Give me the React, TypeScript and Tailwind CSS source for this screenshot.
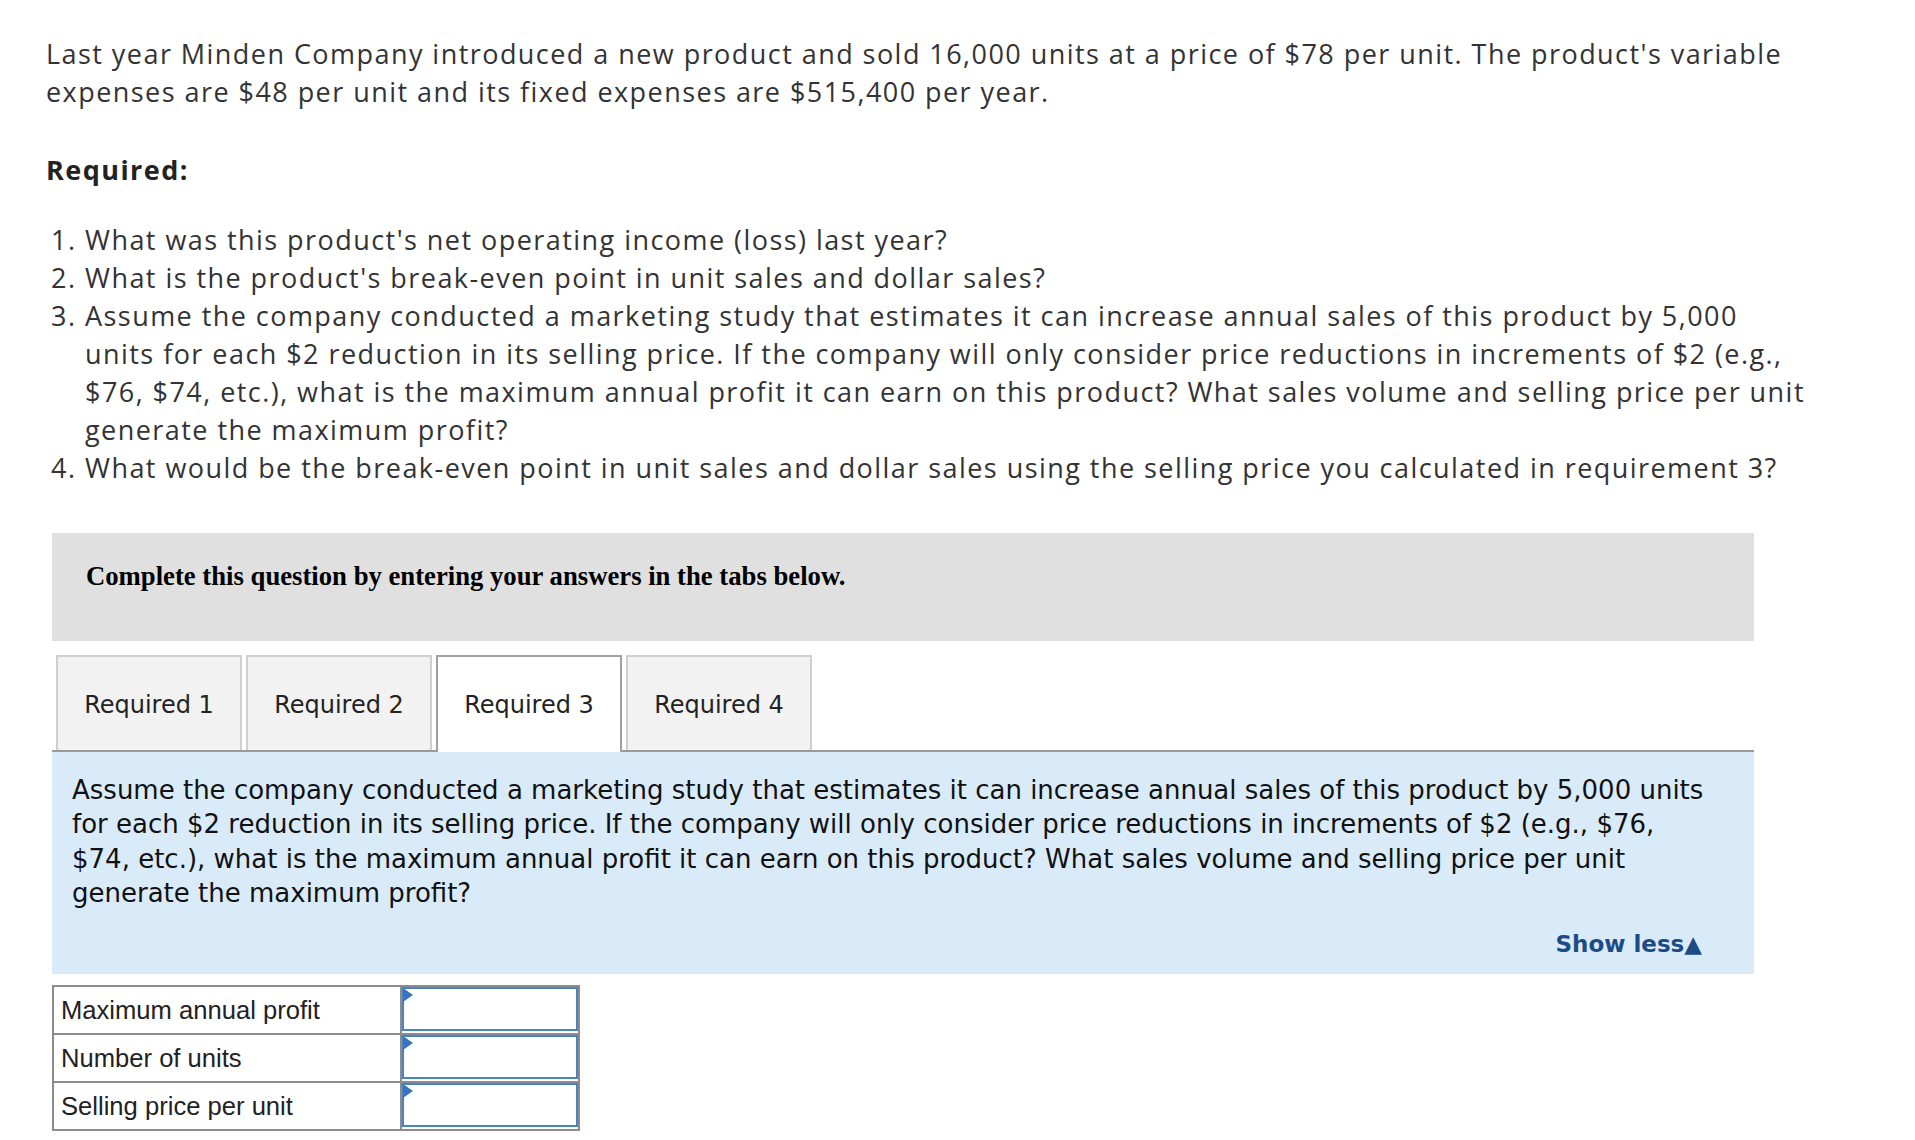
const TABS = ['Required 1', 'Required 2', 'Required 3', 'Required 4']

const ROWS = ['Maximum annual profit', 'Number of units', 'Selling price per unit']

function Requirement({ n, children }: { n: number; children: React.ReactNode }) {
  return (
    <li className="flex">
      <span className="w-[39px] shrink-0 pl-[5px]">{n}.</span>
      <span>{children}</span>
    </li>
  )
}

function AnswerCell() {
  return (
    <td className="border-2 border-[#8c8c8c] p-0 w-[178px] h-[48px] align-top">
      <div className="relative h-[44px] border-2 border-[#4a82c6] bg-white">
        <svg className="absolute left-[-1px] top-[-1px]" width="10" height="14" viewBox="0 0 10 14">
          <path d="M0 0 L10 7 L0 14 Z" fill="#3a74c0" />
        </svg>
      </div>
    </td>
  )
}

export default function App() {
  return (
    <div className="min-h-screen bg-white">
      <div className="pl-[46px] pt-[35px] text-[#333] font-['Open_Sans',sans-serif] text-[27px] tracking-[1.45px] leading-[38px]">
        <p className="whitespace-nowrap">
          Last year Minden Company introduced a new product and sold 16,000 units at a price of $78 per unit. The product's variable
          <br />
          expenses are $48 per unit and its fixed expenses are $515,400 per year.
        </p>

        <p className="mt-[40px] font-bold text-[#222]">Required:</p>

        <ol className="mt-[32px] whitespace-nowrap">
          <Requirement n={1}>What was this product's net operating income (loss) last year?</Requirement>
          <Requirement n={2}>What is the product's break-even point in unit sales and dollar sales?</Requirement>
          <Requirement n={3}>
            Assume the company conducted a marketing study that estimates it can increase annual sales of this product by 5,000
            <br />
            units for each $2 reduction in its selling price. If the company will only consider price reductions in increments of $2 (e.g.,
            <br />
            $76, $74, etc.), what is the maximum annual profit it can earn on this product? What sales volume and selling price per unit
            <br />
            generate the maximum profit?
          </Requirement>
          <Requirement n={4}>
            What would be the break-even point in unit sales and dollar sales using the selling price you calculated in requirement 3?
          </Requirement>
        </ol>

        <div className="ml-[6px] mt-[46px] w-[1702px] tracking-normal">
          <div className="h-[108px] bg-[#e0e0e0] pl-[34px] pt-[28px]">
            <p className="font-['Liberation_Serif',serif] text-[26.7px] leading-[30px] font-bold text-black">
              Complete this question by entering your answers in the tabs below.
            </p>
          </div>

          <div className="mt-[14px] flex gap-[4px] pl-[4px] border-b-2 border-[#9a9a9a] font-['DejaVu_Sans',sans-serif] text-[24px] text-[#222]">
            {TABS.map((t, i) => (
              <div
                key={t}
                className={
                  i === 2
                    ? 'w-[186px] h-[97px] -mb-[2px] pt-[1px] flex items-center justify-center border-2 border-b-0 border-[#a0a0a0] bg-white'
                    : 'w-[186px] h-[95px] pt-[3px] flex items-center justify-center border-2 border-b-0 border-[#cfcfcf] bg-[#f2f2f2]'
                }
              >
                {t}
              </div>
            ))}
          </div>

          <div className="h-[222px] bg-[#d9ebf9] pl-[20px] pr-[52px] pt-[21px] font-['DejaVu_Sans',sans-serif] text-[26px] leading-[34.4px] text-[#111]">
            <p className="whitespace-nowrap">
              Assume the company conducted a marketing study that estimates it can increase annual sales of this product by 5,000 units
              <br />
              for each $2 reduction in its selling price. If the company will only consider price reductions in increments of $2 (e.g., $76,
              <br />
              $74, etc.), what is the maximum annual profit it can earn on this product? What sales volume and selling price per unit
              <br />
              generate the maximum profit?
            </p>
            <div className="mt-[18px] flex justify-end">
              <button className="text-[23px] leading-[30px] font-bold text-[#1b4c86]">Show less▲</button>
            </div>
          </div>

          <table className="mt-[11px] border-collapse font-['Liberation_Sans',sans-serif] text-[25.6px] text-[#222]">
            <tbody>
              {ROWS.map((r) => (
                <tr key={r}>
                  <td className="border-2 border-[#8c8c8c] w-[348px] h-[48px] pl-[7px] leading-[30px]">{r}</td>
                  <AnswerCell />
                </tr>
              ))}
            </tbody>
          </table>
        </div>
      </div>
    </div>
  )
}
